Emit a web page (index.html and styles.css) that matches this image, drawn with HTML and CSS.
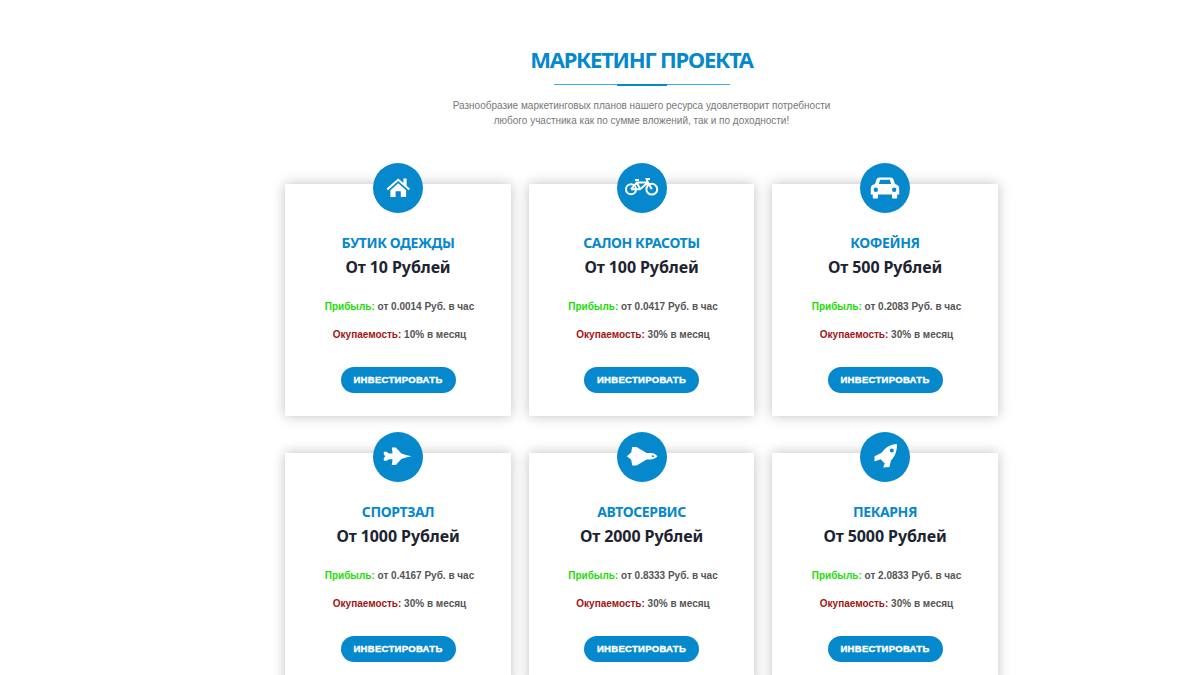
FILE: index.html
```html
<!DOCTYPE html>
<html lang="ru">
<head>
    <meta charset="UTF-8">
    <title>Маркетинг проекта</title>
    <link rel="stylesheet" href="styles.css">
</head>
<body>
    <section class="marketing">
        <h2 class="title">МАРКЕТИНГ ПРОЕКТА</h2>
        <div class="divider"><span></span></div>
        <p class="lead">Разнообразие маркетинговых планов нашего ресурса удовлетворит потребности<br>любого участника как по сумме вложений, так и по доходности!</p>

        <div class="plans">
            <div class="plan">
                <div class="plan-icon">
                    <svg viewBox="0 0 50 50"><path d="M13.6 25.6 25.2 15.4l5.2 4.5V15.6h3.2v7.1l3.4 3-1.4 1.6L25.2 18 15 27.2z"/><path d="M17.4 27.2 25.2 20.2l7.9 7V34H27.8V28.2H22.6V34H17.4z"/></svg>
                </div>
                <h3>БУТИК ОДЕЖДЫ</h3>
                <div class="price">От 10 Рублей</div>
                <p class="stat"><span class="profit">Прибыль:</span> от 0.0014 Руб. в час</p>
                <p class="stat"><span class="payback">Окупаемость:</span> 10% в месяц</p>
                <a class="btn">ИНВЕСТИРОВАТЬ</a>
            </div>
            <div class="plan">
                <div class="plan-icon">
                    <svg viewBox="0 0 50 50" class="bike"><circle cx="14" cy="26.2" r="5"/><circle cx="34.8" cy="26.2" r="5.4"/><path d="M14 26.2 20 19.6H31L34.8 26.2M14 26.2H23L31 19.6M20 19.6 23 26.2M30.6 18.4 29.6 16H33M18 17H22"/></svg>
                </div>
                <h3>САЛОН КРАСОТЫ</h3>
                <div class="price">От 100 Рублей</div>
                <p class="stat"><span class="profit">Прибыль:</span> от 0.0417 Руб. в час</p>
                <p class="stat"><span class="payback">Окупаемость:</span> 30% в месяц</p>
                <a class="btn">ИНВЕСТИРОВАТЬ</a>
            </div>
            <div class="plan">
                <div class="plan-icon">
                    <svg viewBox="0 0 50 50"><path fill-rule="evenodd" d="M19.4 14.4H30.6C32 14.4 33 15.2 33.5 16.6L35 21C37.8 21.6 39.2 23.2 39.2 25.4V31.6H37.2V34.4C37.2 35 36.8 35.4 36.2 35.4H33C32.4 35.4 32 35 32 34.4V31.6H18V34.4C18 35 17.6 35.4 17 35.4H13.8C13.2 35.4 12.8 35 12.8 34.4V31.6H10.8V25.4C10.8 23.2 12.2 21.6 15 21L16.5 16.6C17 15.2 18 14.4 19.4 14.4ZM20.2 16.8 18.8 21H31.2L29.8 16.8ZM15.8 24.5A2.2 2.2 0 1 0 15.8 28.9 2.2 2.2 0 1 0 15.8 24.5ZM34.2 24.5A2.2 2.2 0 1 0 34.2 28.9 2.2 2.2 0 1 0 34.2 24.5Z"/></svg>
                </div>
                <h3>КОФЕЙНЯ</h3>
                <div class="price">От 500 Рублей</div>
                <p class="stat"><span class="profit">Прибыль:</span> от 0.2083 Руб. в час</p>
                <p class="stat"><span class="payback">Окупаемость:</span> 30% в месяц</p>
                <a class="btn">ИНВЕСТИРОВАТЬ</a>
            </div>
            <div class="plan">
                <div class="plan-icon">
                    <svg viewBox="0 0 50 50"><path d="M38.4 24.3 33 23 28.4 21.6 22.8 15.6H18.8L19.6 21.4H16L13.4 19.8H10.8V22.6L12.4 24.3 10.8 26V28.8H13.4L16 27.2H19.6L18.8 33H22.8L28.4 27 33 25.6Z"/></svg>
                </div>
                <h3>СПОРТЗАЛ</h3>
                <div class="price">От 1000 Рублей</div>
                <p class="stat"><span class="profit">Прибыль:</span> от 0.4167 Руб. в час</p>
                <p class="stat"><span class="payback">Окупаемость:</span> 30% в месяц</p>
                <a class="btn">ИНВЕСТИРОВАТЬ</a>
            </div>
            <div class="plan">
                <div class="plan-icon">
                    <svg viewBox="0 0 50 50"><path fill-rule="evenodd" d="M9.8 24.2 14.2 20.6 15.2 15H19.6L29.6 21H34C37 21.2 39 22.6 40.4 24.2 39 25.8 37 27.2 34 27.4H29.6L19.6 33.4H15.2L14.2 27.8ZM36 23.2A1 1 0 1 0 36 25.2 1 1 0 1 0 36 23.2Z"/></svg>
                </div>
                <h3>АВТОСЕРВИС</h3>
                <div class="price">От 2000 Рублей</div>
                <p class="stat"><span class="profit">Прибыль:</span> от 0.8333 Руб. в час</p>
                <p class="stat"><span class="payback">Окупаемость:</span> 30% в месяц</p>
                <a class="btn">ИНВЕСТИРОВАТЬ</a>
            </div>
            <div class="plan">
                <div class="plan-icon">
                    <svg viewBox="0 0 50 50"><path fill-rule="evenodd" d="M37 12C37 19 35.4 24 31 28.4L29.4 35 23.2 35.4 24.8 31.4 20.6 27.2 14.4 29.4 14.6 24.2 21.6 20.8C26 15 30 12.6 37 12ZM31.8 16.4A2 2 0 1 0 31.8 20.4 2 2 0 1 0 31.8 16.4Z"/></svg>
                </div>
                <h3>ПЕКАРНЯ</h3>
                <div class="price">От 5000 Рублей</div>
                <p class="stat"><span class="profit">Прибыль:</span> от 2.0833 Руб. в час</p>
                <p class="stat"><span class="payback">Окупаемость:</span> 30% в месяц</p>
                <a class="btn">ИНВЕСТИРОВАТЬ</a>
            </div>
        </div>
    </section>
</body>
</html>
```

FILE: styles.css
```css
html, body {
    height: 675px;
    overflow: hidden;
}

body {
    margin: 0;
    background-color: #fff;
    font-family: "Liberation Sans", Arial, sans-serif;
}

.marketing {
    padding: 44px 0 0 83px;
    text-align: center;
}

.title {
    margin: 0;
    font-family: "Noto Sans", sans-serif;
    font-size: 22px;
    line-height: 31px;
    font-weight: 700;
    letter-spacing: -1.25px;
    color: #0688cd;
}

.divider {
    width: 176px;
    height: 1px;
    margin: 9px auto 0;
    background-color: #41b1ea;
    display: flex;
    justify-content: center;
    align-items: center;
}

.divider span {
    flex: none;
    width: 50px;
    height: 2px;
    background-color: #0688cd;
}

.lead {
    margin: 13px 0 0;
    font-size: 10px;
    line-height: 15px;
    color: #777;
}

.plans {
    width: 712.5px;
    margin: 56px auto 0;
    display: grid;
    grid-template-columns: repeat(3, 1fr);
    column-gap: 18px;
    row-gap: 37px;
}

.plan {
    height: 232px;
    background-color: #fff;
    box-shadow: 0 0 12px rgba(0, 0, 0, 0.25);
}

.plan-icon {
    width: 50px;
    height: 50px;
    margin: -21px auto 0;
    border-radius: 50%;
    background-color: #0688cd;
}

.plan-icon svg {
    display: block;
    width: 50px;
    height: 50px;
    fill: #fff;
}

.plan-icon .bike {
    fill: none;
    stroke: #fff;
    stroke-width: 2;
}

.plan h3 {
    margin: 19px 0 0;
    font-family: "Noto Sans", sans-serif;
    font-size: 14px;
    line-height: 22px;
    font-weight: 700;
    letter-spacing: -0.4px;
    color: #0688cd;
}

.price {
    font-family: "Noto Sans", sans-serif;
    font-size: 16px;
    line-height: 26px;
    font-weight: 700;
    letter-spacing: -0.1px;
    color: #1d2330;
}

.stat {
    margin: 0;
    padding-left: 3px;
    font-size: 10px;
    line-height: 16px;
    font-weight: 700;
    color: #555;
}

.price + .stat {
    margin-top: 19px;
}

.stat + .stat {
    margin-top: 12px;
}

.profit {
    color: #22dc05;
}

.payback {
    color: #a31515;
}

.btn {
    display: block;
    width: 115px;
    height: 26px;
    margin: 24px auto 0;
    border-radius: 13px;
    background-color: #0688cd;
    font-size: 9.5px;
    line-height: 26px;
    font-weight: 700;
    letter-spacing: 0.3px;
    color: #fff;
    -webkit-text-stroke: 0.4px #fff;
}
```
